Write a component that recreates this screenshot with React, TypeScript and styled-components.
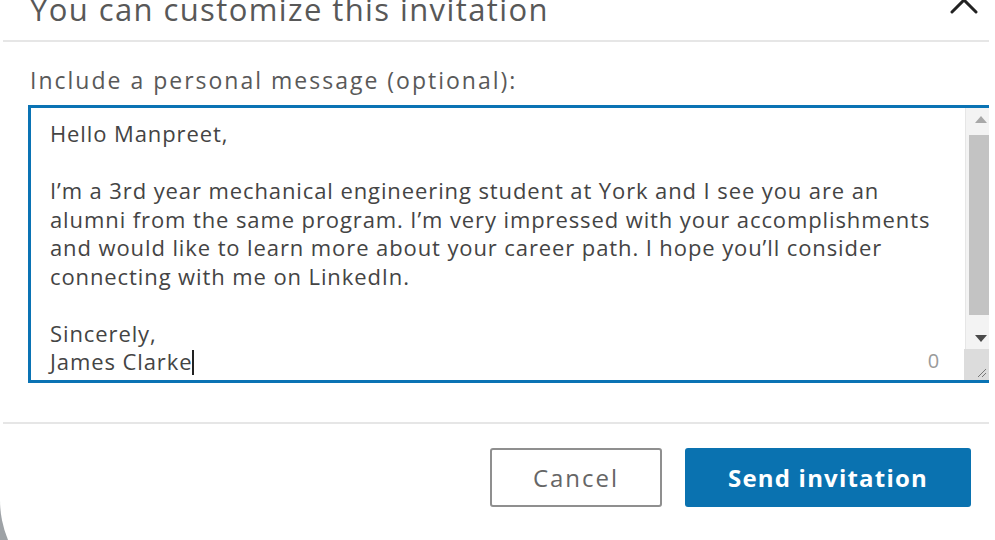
import React from "react";
import styled, { createGlobalStyle } from "styled-components";

const GlobalStyle = createGlobalStyle`
  html, body {
    margin: 0;
    padding: 0;
  }
  body {
    width: 995px;
    height: 540px;
    overflow: hidden;
    background: #9ea2a6;
    font-family: "Open Sans", "Noto Sans", sans-serif;
  }
  * {
    box-sizing: border-box;
  }
`;

const Dialog = styled.div`
  width: 995px;
  height: 618px;
  margin-top: -14px;
  background: #fff;
  border-bottom-left-radius: 104px;
  display: flex;
  flex-direction: column;
`;

const Header = styled.div`
  display: flex;
  justify-content: space-between;
  align-items: flex-start;
  height: 56px;
  margin: 0 6px 0 3px;
  padding: 0 11px 0 27px;
  border-bottom: 2px solid #e6e6e6;
`;

const Title = styled.h2`
  margin: 0;
  padding-top: 5px;
  font-size: 31px;
  line-height: 36px;
  letter-spacing: 1.4px;
  font-weight: 400;
  color: #585858;
`;

const CloseButton = styled.button`
  width: 28px;
  height: 28px;
  padding: 0;
  border: none;
  background: none;
  color: #222;
  cursor: pointer;
`;

const Body = styled.div`
  padding: 24px 6px 39px 28px;
`;

const Label = styled.label`
  display: block;
  padding-left: 2px;
  margin-bottom: 11px;
  font-size: 23px;
  line-height: 28px;
  letter-spacing: 2px;
  color: #595959;
`;

const Field = styled.div`
  display: flex;
  height: 278px;
  border: 3px solid #0a73b4;
  border-right: none;
`;

const Message = styled.div`
  flex: 1;
  padding: 11px 0 0 19px;
  font-size: 22px;
  line-height: 28.5px;
  letter-spacing: 0.9px;
  color: #444;
  white-space: pre;
`;

const LastRow = styled.div`
  display: flex;
  align-items: center;
`;

const Caret = styled.span`
  display: inline-block;
  width: 2px;
  height: 25px;
  vertical-align: -5px;
  background: #222;
`;

const Counter = styled.span`
  margin-left: auto;
  padding-right: 25px;
  font-size: 20px;
  color: #9a9a9a;
`;

const Scrollbar = styled.div`
  width: 24px;
  display: flex;
  flex-direction: column;
  background: #f3f3f3;
  border-left: 1px solid #e6e6e6;
`;

const Arrow = styled.div<{ down?: boolean }>`
  height: 22px;
  display: flex;
  align-items: center;
  justify-content: center;
  padding-left: 7px;
  color: ${(p) => (p.down ? "#4a4a4a" : "#a8a8a8")};
`;

const Thumb = styled.div`
  height: 180px;
  margin: 5px 0 0 3px;
  background: #c3c3c3;
`;

const Spacer = styled.div`
  flex: 1;
`;

const Corner = styled.div`
  height: 31px;
  margin-left: -2px;
  background: #dcdcdc;
  display: flex;
  align-items: flex-end;
  justify-content: flex-end;
  padding: 0 2px 2px 0;
  color: #777;
`;

const Footer = styled.div`
  display: flex;
  justify-content: flex-end;
  gap: 23px;
  margin: 0 6px 0 3px;
  padding: 24px 18px 0 0;
  border-top: 2px solid #e6e6e6;
`;

const Button = styled.button<{ primary?: boolean }>`
  height: 59px;
  padding: 0;
  border-radius: 3px;
  font-family: "Open Sans", "Noto Sans", sans-serif;
  font-size: 24px;
  font-weight: ${(p) => (p.primary ? 700 : 400)};
  letter-spacing: ${(p) => (p.primary ? "1.2px" : "2px")};
  width: ${(p) => (p.primary ? "286px" : "172px")};
  color: ${(p) => (p.primary ? "#fff" : "#666")};
  background: ${(p) => (p.primary ? "#0a72b0" : "#fff")};
  border: ${(p) => (p.primary ? "none" : "2px solid #8f8f8f")};
  cursor: pointer;
`;

const message = `Hello Manpreet,

I’m a 3rd year mechanical engineering student at York and I see you are an
alumni from the same program. I’m very impressed with your accomplishments
and would like to learn more about your career path. I hope you’ll consider
connecting with me on LinkedIn.

Sincerely,`;

const App = () => {
  return (
    <>
      <GlobalStyle />
      <Dialog>
        <Header>
          <Title>You can customize this invitation</Title>
          <CloseButton aria-label="Dismiss">
            <svg width="28" height="28" viewBox="0 0 28 28">
              <path d="M2 2 L26 26 M26 2 L2 26" stroke="currentColor" strokeWidth="3" strokeLinecap="round" />
            </svg>
          </CloseButton>
        </Header>
        <Body>
          <Label>Include a personal message (optional):</Label>
          <Field>
            <Message>
              {message}
              <LastRow>
                <span>
                  James Clarke
                  <Caret />
                </span>
                <Counter>0</Counter>
              </LastRow>
            </Message>
            <Scrollbar>
              <Arrow>
                <svg width="12" height="7" viewBox="0 0 12 7">
                  <path d="M0 7 L6 0 L12 7 Z" fill="currentColor" />
                </svg>
              </Arrow>
              <Thumb />
              <Spacer />
              <Arrow down>
                <svg width="12" height="7" viewBox="0 0 12 7">
                  <path d="M0 0 L12 0 L6 7 Z" fill="currentColor" />
                </svg>
              </Arrow>
              <Corner>
                <svg width="10" height="10" viewBox="0 0 10 10">
                  <path d="M1 9 L9 1 M5 9 L9 5" stroke="currentColor" strokeWidth="1" />
                </svg>
              </Corner>
            </Scrollbar>
          </Field>
        </Body>
        <Footer>
          <Button>Cancel</Button>
          <Button primary>Send invitation</Button>
        </Footer>
      </Dialog>
    </>
  );
};

export default App;
